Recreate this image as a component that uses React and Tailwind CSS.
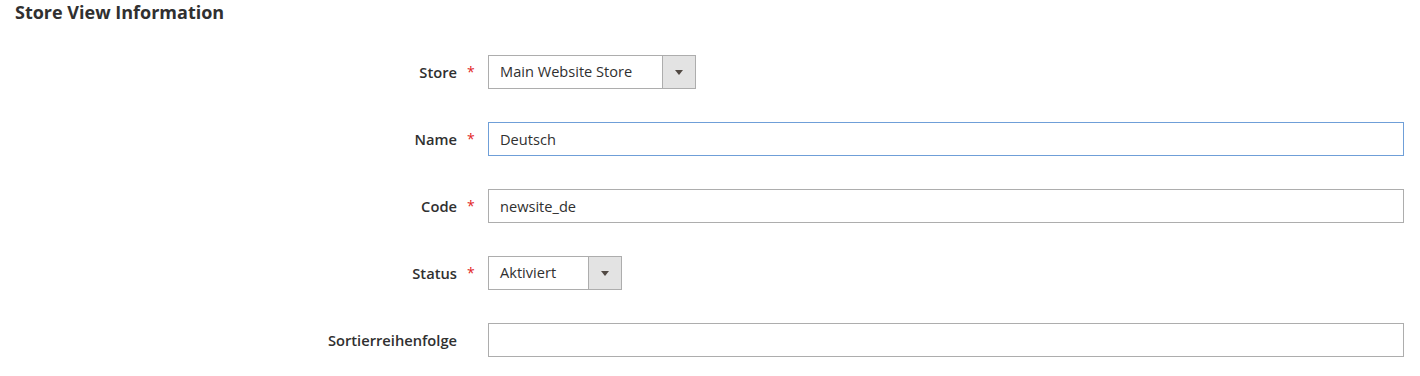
import React, { useState } from "react";

const font = { fontFamily: "'Open Sans', 'Noto Sans', sans-serif" };

function Field({ label, required, children }) {
  return (
    <div className="flex items-center h-[34px]">
      <label className="w-[457px] text-right text-[14.7px] font-semibold text-[#303030]">
        {label}
      </label>
      <span className="w-[31px] pl-[10px] text-[14px] text-[#e22626] leading-none">
        {required ? "*" : ""}
      </span>
      {children}
    </div>
  );
}

function Select({ value, width }) {
  return (
    <div className={`relative flex h-[34px] ${width} border border-[#adadad] bg-white`}>
      <div className="flex-1 pl-[11px] flex items-center text-[14.6px] text-[#303030]">
        {value}
      </div>
      <div className="w-[33px] border-l border-[#adadad] bg-[#e3e3e3] flex items-center justify-center">
        <svg width="8" height="5" viewBox="0 0 8 5">
          <path d="M0 0 L8 0 L4 5 Z" fill="#514943" />
        </svg>
      </div>
    </div>
  );
}

export default function App() {
  const [name, setName] = useState("Deutsch");
  const [code, setCode] = useState("newsite_de");
  const [sort, setSort] = useState("");

  return (
    <div style={font} className="bg-white w-[1420px] h-[376px] pl-[15px] pr-[16px]">
      <h2 className="text-[18px] font-bold text-[#303030] leading-[24px]">
        Store View Information
      </h2>
      <div className="flex flex-col gap-[33px] mt-[31px] -ml-[15px]">
        <Field label="Store" required>
          <Select value="Main Website Store" width="w-[208px]" />
        </Field>
        <Field label="Name" required>
          <input
            value={name}
            onChange={(e) => setName(e.target.value)}
            className="flex-1 h-[34px] border border-[#6f9fd8] px-[11px] text-[14.6px] text-[#303030] outline-none"
          />
        </Field>
        <Field label="Code" required>
          <input
            value={code}
            onChange={(e) => setCode(e.target.value)}
            className="flex-1 h-[34px] border border-[#adadad] px-[11px] text-[14.6px] text-[#303030] outline-none"
          />
        </Field>
        <Field label="Status" required>
          <Select value="Aktiviert" width="w-[134px]" />
        </Field>
        <Field label="Sortierreihenfolge">
          <input
            value={sort}
            onChange={(e) => setSort(e.target.value)}
            className="flex-1 h-[34px] border border-[#adadad] px-[11px] text-[14.6px] text-[#303030] outline-none"
          />
        </Field>
      </div>
    </div>
  );
}
